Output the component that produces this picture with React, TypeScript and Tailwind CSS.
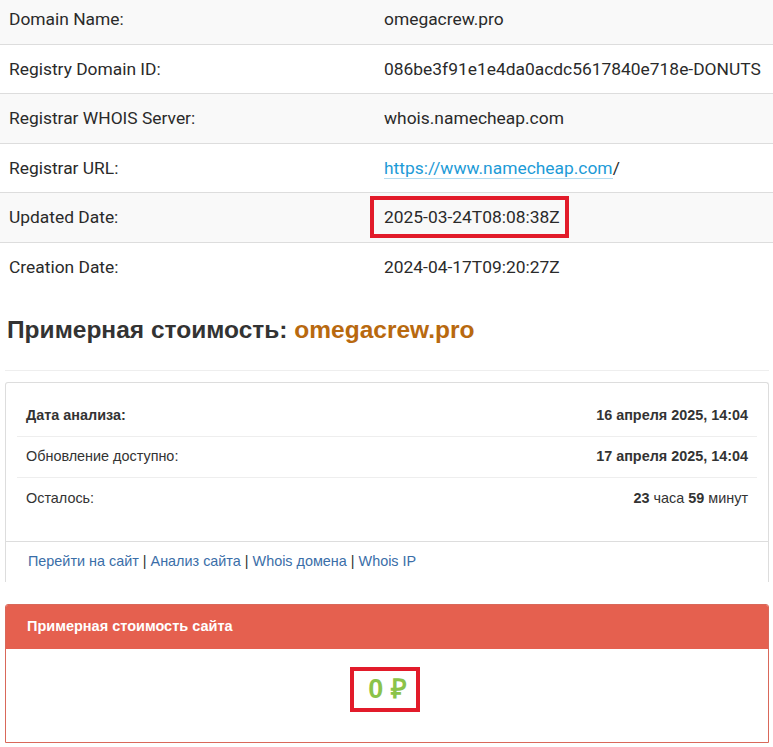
const whoisRows: { label: string; value: React.ReactNode; marked?: boolean }[] = [
  { label: "Domain Name:", value: "omegacrew.pro" },
  { label: "Registry Domain ID:", value: "086be3f91e1e4da0acdc5617840e718e-DONUTS" },
  { label: "Registrar WHOIS Server:", value: "whois.namecheap.com" },
  {
    label: "Registrar URL:",
    value: (
      <>
        <a href="#" className="text-[#1d9bd7] border-b border-[#b5dcef]">
          https://www.namecheap.com
        </a>
        /
      </>
    ),
  },
  { label: "Updated Date:", value: "2025-03-24T08:08:38Z", marked: true },
  { label: "Creation Date:", value: "2024-04-17T09:20:27Z" },
]

function WhoisTable() {
  return (
    <div className="-mt-[5px] font-['Roboto',sans-serif] text-[17.4px] text-[#2a2a2a]">
      {whoisRows.map((row, i) => (
        <div
          key={row.label}
          className={`flex h-[49.5px] items-center whitespace-nowrap ${i < whoisRows.length - 1 ? "border-b border-[#dddddd]" : ""} ${i % 2 === 0 ? "bg-[#f9f9f9]" : "bg-white"}`}
        >
          <div className="w-[375px] shrink-0 pl-[9px]">{row.label}</div>
          <div className="pl-[9px]">
            {row.marked ? (
              <span className="-ml-[14px] inline-block border-4 border-[#e21b2a] py-[4px] pl-[10px] pr-[5px] leading-[26px]">
                {row.value}
              </span>
            ) : (
              row.value
            )}
          </div>
        </div>
      ))}
    </div>
  )
}

function InfoPanel() {
  return (
    <div className="mt-[11px] rounded-t-[3px] border border-b-0 border-[#dddddd] text-[14.4px] text-[#333]">
      <div className="px-[11px] pt-[13px] pb-[22px]">
        <div className="flex h-[41px] items-center justify-between border-b border-[#eeeeee] px-[9px]">
          <span className="font-bold">Дата анализа:</span>
          <span className="font-bold">16 апреля 2025, 14:04</span>
        </div>
        <div className="flex h-[41px] items-center justify-between border-b border-[#eeeeee] px-[9px]">
          <span>Обновление доступно:</span>
          <span className="font-bold">17 апреля 2025, 14:04</span>
        </div>
        <div className="flex h-[41px] items-center justify-between px-[9px]">
          <span>Осталось:</span>
          <span>
            <b>23</b> часа <b>59</b> минут
          </span>
        </div>
      </div>
      <div className="flex h-[41px] items-center border-t border-[#dddddd] pl-[22px]">
        <a href="#" className="text-[#3a6ea8]">Перейти на сайт</a>
        <span className="px-[4px]">|</span>
        <a href="#" className="text-[#3a6ea8]">Анализ сайта</a>
        <span className="px-[4px]">|</span>
        <a href="#" className="text-[#3a6ea8]">Whois домена</a>
        <span className="px-[4px]">|</span>
        <a href="#" className="text-[#3a6ea8]">Whois IP</a>
      </div>
    </div>
  )
}

function PricePanel() {
  return (
    <div className="mt-[22px] overflow-hidden rounded-t-[3px] border border-[#d9685a]">
      <div className="flex h-[44px] items-center bg-[#e5604f] px-[21px] text-[14.5px] font-bold text-white">
        Примерная стоимость сайта
      </div>
      <div className="flex justify-center bg-white pt-[18px] pb-[30px]">
        <span className="ml-[-4px] inline-block border-4 border-[#e21b2a] pl-[14px] pr-[9px] text-[27px] leading-[37px] font-bold text-[#8bc34a]">
          0 ₽
        </span>
      </div>
    </div>
  )
}

export default function App() {
  return (
    <div className="min-h-screen bg-white font-['Liberation_Sans',Arial,sans-serif]">
      <WhoisTable />
      <div className="pl-[5px] pr-[4px]">
        <h2 className="mt-[25px] mb-[28px] pl-[2px] text-[24.5px] leading-[25px] font-bold text-[#333]">
          Примерная стоимость: <span className="text-[#b8690f]">omegacrew.pro</span>
        </h2>
        <hr className="border-0 border-t border-[#eeeeee]" />
        <InfoPanel />
        <PricePanel />
      </div>
    </div>
  )
}
